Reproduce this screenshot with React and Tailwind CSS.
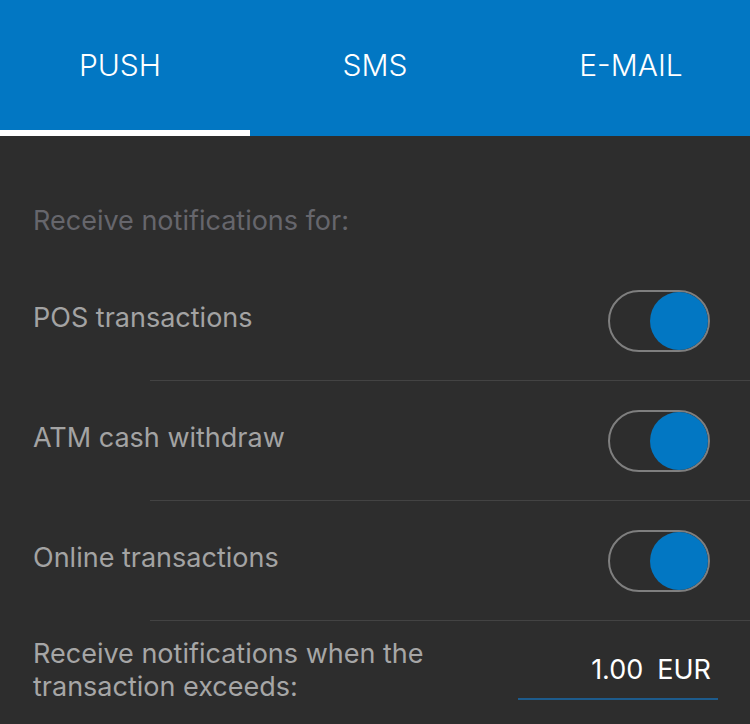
import React from 'react'

const rows = ['POS transactions', 'ATM cash withdraw', 'Online transactions']

function Toggle() {
  return (
    <div className="flex h-[62px] w-[102px] items-center justify-end rounded-full border-2 border-[#7f7f7f]">
      <div className="size-[58px] rounded-full bg-[#0277c3]" />
    </div>
  )
}

export default function App() {
  return (
    <div className="h-[724px] w-[750px] overflow-hidden bg-[#2d2d2d] font-['Inter',sans-serif]">
      <div className="flex h-[136px] bg-[#0277c3] text-[30px] font-light text-white">
        <div className="flex w-[250px] items-center justify-center border-b-[6px] border-white pr-[10px]">PUSH</div>
        <div className="flex w-[250px] items-center justify-center border-b-[6px] border-transparent">SMS</div>
        <div className="flex w-[250px] items-center justify-center border-b-[6px] border-transparent pl-[12px]">E-MAIL</div>
      </div>

      <div className="h-[125px] pl-[33px] pt-[69px] text-[27px] leading-[32px] text-[#66666c]">
        Receive notifications for:
      </div>

      {rows.map((r) => (
        <div key={r}>
          <div className="flex h-[119px] items-center justify-between pl-[33px] pr-[40px]">
            <span className="pb-[6px] text-[27px] leading-[32px] text-[#a3a3a3]">{r}</span>
            <Toggle />
          </div>
          <div className="ml-[150px] h-px bg-[#434343]" />
        </div>
      ))}

      <div className="flex items-start justify-between pl-[33px] pr-[32px] pt-[16px]">
        <div className="text-[27px] leading-[33px] text-[#a6a6a6]">
          Receive notifications when the
          <br />
          transaction exceeds:
        </div>
        <div className="mt-[16px] flex w-[200px] justify-end border-b-2 border-[#1d5b8c] pb-[11px] pr-[7px] text-[27px] leading-[34px] text-white">
          <span>1.00</span>
          <span className="ml-[14px]">EUR</span>
        </div>
      </div>
    </div>
  )
}
